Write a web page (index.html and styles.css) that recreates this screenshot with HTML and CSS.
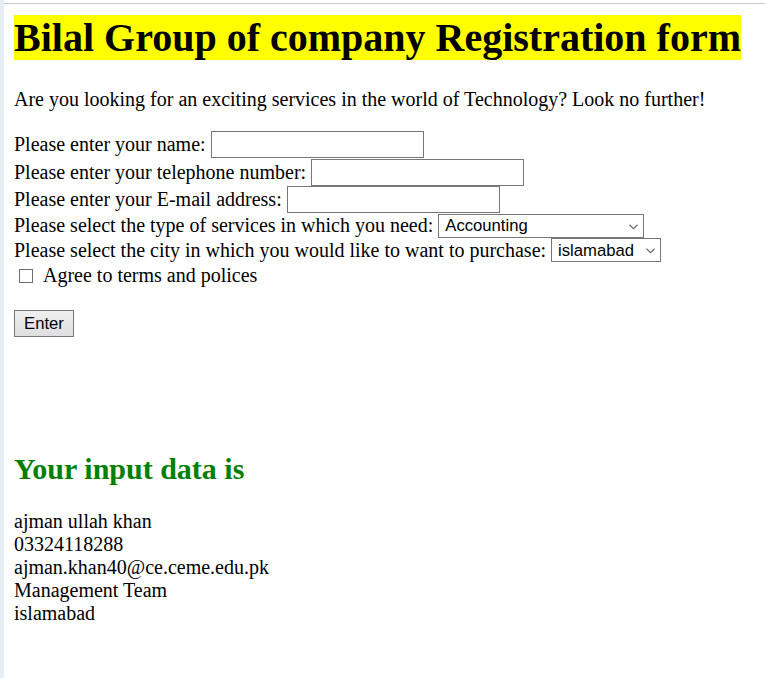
FILE: index.html
```html
<!DOCTYPE html>
<html lang="en">
<head>
<meta charset="utf-8">
<title>Bilal Group of company Registration form</title>
<link rel="stylesheet" href="styles.css">
</head>
<body>
<div class="topbar"></div>
<main class="page">
  <h1 class="title">Bilal Group of company Registration form</h1>
  <p class="intro">Are you looking for an exciting services in the world of Technology? Look no further!</p>
  <form class="form">
    <div class="row r1"><label for="name">Please enter your name:</label><input id="name" class="field" type="text"></div>
    <div class="row r2"><label for="tel">Please enter your telephone number:</label><input id="tel" class="field" type="text"></div>
    <div class="row r3"><label for="mail">Please enter your E-mail address:</label><input id="mail" class="field" type="text"></div>
    <div class="row r4"><label for="svc">Please select the type of services in which you need:</label>
      <span class="sel-wrap"><select id="svc" class="sel sel-svc"><option>Accounting</option><option>Management Team</option></select><svg class="chev" width="9" height="6" viewBox="0 0 9 6"><path d="M0.5 0.8 L4.5 4.6 L8.5 0.8" fill="none" stroke="#6d6d6d" stroke-width="1.2"/></svg></span></div>
    <div class="row r5"><label for="city">Please select the city in which you would like to want to purchase:</label>
      <span class="sel-wrap"><select id="city" class="sel sel-city"><option>islamabad</option><option>lahore</option></select><svg class="chev" width="9" height="6" viewBox="0 0 9 6"><path d="M0.5 0.8 L4.5 4.6 L8.5 0.8" fill="none" stroke="#6d6d6d" stroke-width="1.2"/></svg></span></div>
    <div class="row r6"><input id="agree" class="check" type="checkbox"><label for="agree">Agree to terms and polices</label></div>
    <button type="button" class="btn">Enter</button>
  </form>
  <h2 class="result-title">Your input data is</h2>
  <div class="result">
    <div>ajman ullah khan</div>
    <div>03324118288</div>
    <div>ajman.khan40@ce.ceme.edu.pk</div>
    <div>Management Team</div>
    <div>islamabad</div>
  </div>
</main>
</body>
</html>
```
FILE: styles.css
```css
html, body {
  margin: 0;
  padding: 0;
  background: #ffffff;
}
body {
  min-height: 678px;
  box-sizing: border-box;
  border-left: 4px solid #e6edf5;
  font-family: "Liberation Serif", "Times New Roman", serif;
  font-size: 20px;
  line-height: 23px;
  color: #000;
}
.topbar {
  height: 3px;
  border-bottom: 1px solid #c3c6ca;
}
.page {
  padding: 0 10px;
}
.title {
  width: fit-content;
  margin: 11px 0 0;
  background: #ffff00;
  font-size: 40px;
  line-height: 45px;
  font-weight: bold;
}
.intro {
  margin: 28px 0 20px;
}
.form {
  display: flex;
  flex-direction: column;
  align-items: flex-start;
}
.row {
  display: flex;
  align-items: center;
  gap: 5px;
  white-space: nowrap;
}
.r1 { height: 27px; }
.r2 { height: 28px; }
.r3 { height: 27px; }
.r4 { height: 25px; }
.r5 { height: 24px; }
.r6 { height: 25px; gap: 10px; padding-top: 2px; box-sizing: border-box; }
.field {
  box-sizing: border-box;
  width: 213px;
  height: 27px;
  margin: 0;
  border: 1px solid #767676;
  border-radius: 0;
  padding: 1px 3px;
  font-family: "Liberation Sans", Arial, sans-serif;
  font-size: 16.67px;
}
.sel-wrap {
  position: relative;
  display: flex;
}
.sel {
  appearance: none;
  -webkit-appearance: none;
  box-sizing: border-box;
  height: 24px;
  margin: 0;
  padding: 0 0 0 6px;
  border: 1px solid #767676;
  border-radius: 0;
  background: #fff;
  font-family: "Liberation Sans", Arial, sans-serif;
  font-size: 16.67px;
  color: #000;
}
.chev {
  position: absolute;
  right: 6px;
  top: 10px;
  pointer-events: none;
}
.sel-svc { width: 206px; }
.sel-city { width: 110px; }
.check {
  appearance: none;
  -webkit-appearance: none;
  box-sizing: border-box;
  width: 14px;
  height: 14px;
  margin: 0 0 0 5px;
  border: 1px solid #6f6f6f;
  border-radius: 0;
  background: #fff;
}
.btn {
  margin-top: 23px;
  box-sizing: border-box;
  width: 60px;
  height: 27px;
  padding: 0;
  border: 1px solid #767676;
  border-radius: 0;
  background: linear-gradient(#efefef, #dedede);
  font-family: "Liberation Sans", Arial, sans-serif;
  font-size: 16.67px;
  color: #000;
}
.result-title {
  margin: 114px 0 0;
  color: #008000;
  font-size: 30px;
  line-height: 35px;
  font-weight: bold;
}
.result {
  margin-top: 24px;
}
```
